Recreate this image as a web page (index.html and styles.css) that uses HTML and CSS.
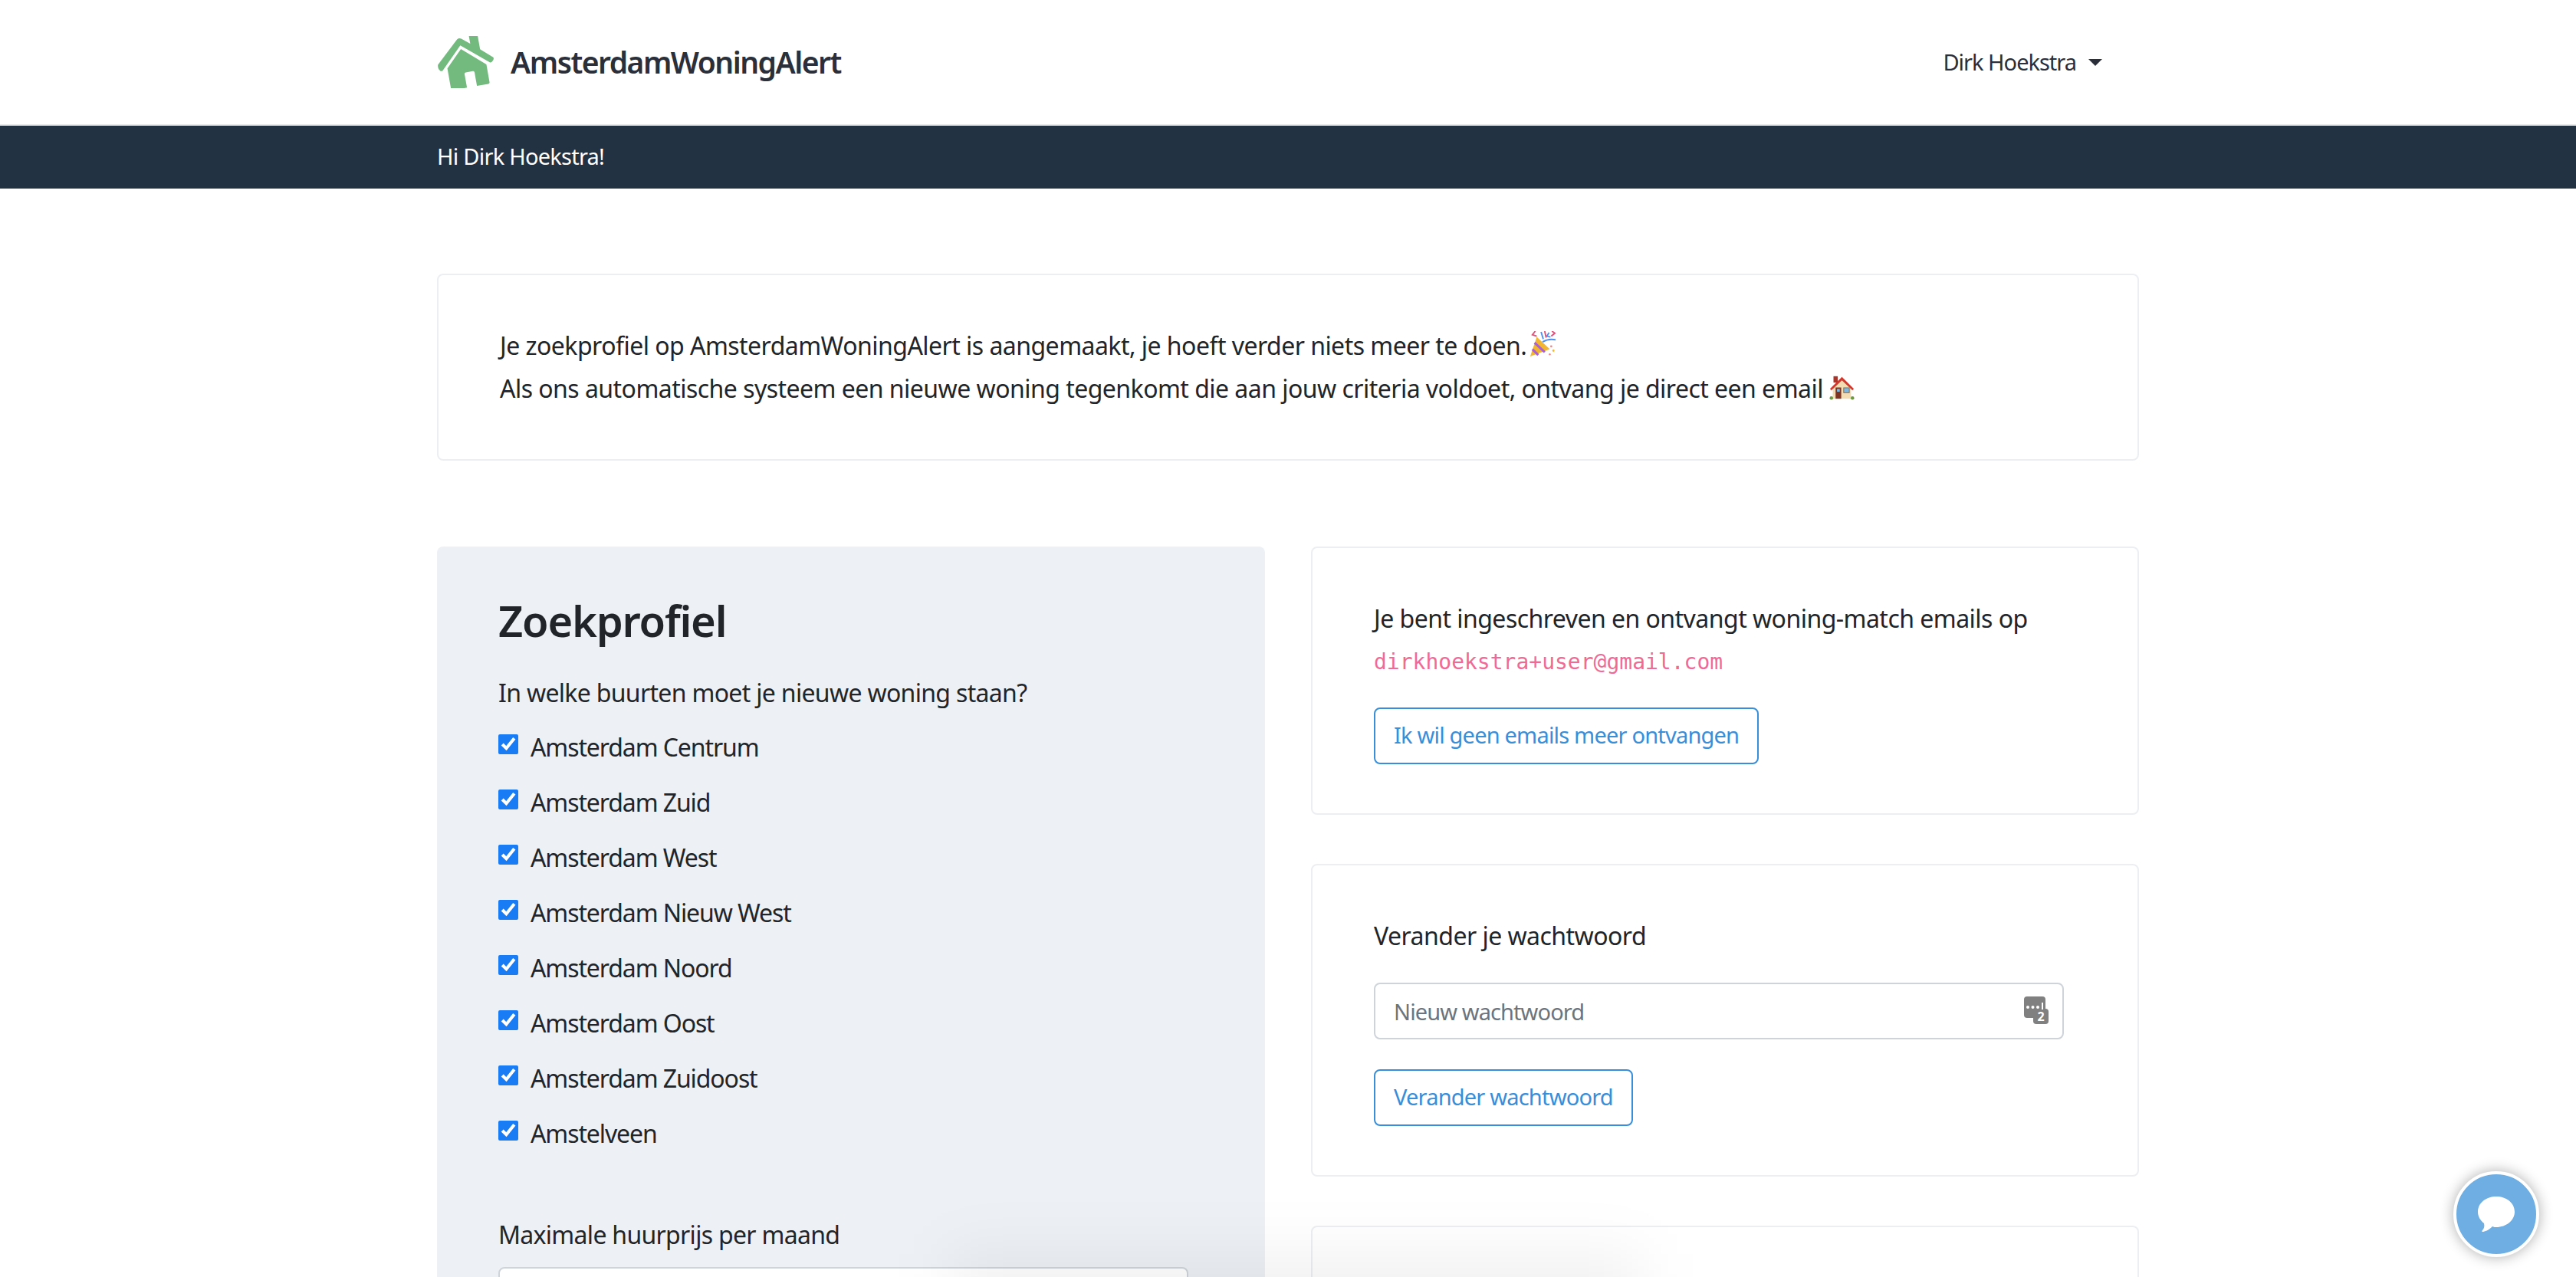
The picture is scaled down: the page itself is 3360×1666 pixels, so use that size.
FILE: index.html
```html
<!DOCTYPE html>
<html lang="nl">
<head>
  <meta charset="UTF-8">
  <title>AmsterdamWoningAlert</title>
  <link rel="stylesheet" href="styles.css">
</head>
<body>
  <header class="topbar">
    <div class="wrap topbar-inner">
      <a class="brand">
        <svg class="brand-icon" viewBox="0 0 80 72" width="76" height="68">
          <g transform="rotate(-10 40 36)" fill="#73ba7e">
            <path d="M1 33 L33 3 Q36 1 39 3 L50 12 L50 2 Q50 0 52 0 L60 0 Q62 0 62 2 L62 22 L78 36 Q79 38 77 40 L75 42 Q73 43 72 42 L36 12 L6 42 Q5 43 3 42 L1 39 Q0 36 1 33Z"/>
            <path d="M36 17 L67 44 L67 69 Q67 71 65 71 L49 71 L49 52 Q49 50 47 50 L37 50 Q35 50 35 52 L35 71 L15 71 Q13 71 13 69 L13 40Z"/>
          </g>
        </svg>
        <span class="brand-name">AmsterdamWoningAlert</span>
      </a>
      <div class="user-menu">Dirk Hoekstra <span class="caret"></span></div>
    </div>
  </header>
  <div class="greeting">
    <div class="wrap">Hi Dirk Hoekstra!</div>
  </div>

  <main class="wrap main">
    <section class="card intro">
      <p>Je zoekprofiel op AmsterdamWoningAlert is aangemaakt, je hoeft verder niets meer te doen.
        <svg class="emoji emoji-party" viewBox="0 0 36 36" width="34" height="34">
          <path d="M1 35 L10 8 L28 25Z" fill="#f2b632"/>
          <path d="M7 16 L21 29 M4 25 L12 33" stroke="#a65fd6" stroke-width="3.2"/>
          <path d="M18 15 Q26 10 36 12 M16 1 L19 11 M27 2 L24 7 L29 8" stroke="#4f8ff0" stroke-width="2" fill="none"/>
          <path d="M8 0 L4 5 L10 7 M21 0 L23 9 M31 0 L35 3 L30 7" stroke="#e0527c" stroke-width="2" fill="none"/>
          <circle cx="30" cy="21" r="1.5" fill="#e88"/><circle cx="33" cy="27" r="1.5" fill="#f2b632"/><circle cx="28" cy="32" r="1.3" fill="#e88"/>
        </svg>
        <br>Als ons automatische systeem een nieuwe woning tegenkomt die aan jouw criteria voldoet, ontvang je direct een email
        <svg class="emoji" viewBox="0 0 36 36" width="33" height="33">
          <rect x="6" y="2" width="6" height="9" fill="#a8352c"/>
          <path d="M18 7 L31 19 L31 34 L5 34 L5 19Z" fill="#f3dcb2"/>
          <path d="M1 20 L18 3 L35 20 L33 22 L18 8 L3 22Z" fill="#cf3a30"/>
          <rect x="9" y="18" width="8" height="16" fill="#7c3322"/><rect x="11" y="20" width="4" height="4" fill="#7bb7e0"/>
          <rect x="20" y="18" width="9" height="8" fill="#7a6a55"/><rect x="21" y="19" width="7" height="6" fill="#7bb7e0"/>
          <circle cx="3" cy="33" r="2.5" fill="#6a9a3a"/><circle cx="33" cy="33" r="2.5" fill="#6a9a3a"/>
        </svg>
      </p>
    </section>

    <div class="columns">
      <section class="profile">
        <h2>Zoekprofiel</h2>
        <p class="question">In welke buurten moet je nieuwe woning staan?</p>
        <label class="check"><input type="checkbox" checked> Amsterdam Centrum</label>
        <label class="check"><input type="checkbox" checked> Amsterdam Zuid</label>
        <label class="check"><input type="checkbox" checked> Amsterdam West</label>
        <label class="check"><input type="checkbox" checked> Amsterdam Nieuw West</label>
        <label class="check"><input type="checkbox" checked> Amsterdam Noord</label>
        <label class="check"><input type="checkbox" checked> Amsterdam Oost</label>
        <label class="check"><input type="checkbox" checked> Amsterdam Zuidoost</label>
        <label class="check"><input type="checkbox" checked> Amstelveen</label>
        <p class="price-label">Maximale huurprijs per maand</p>
        <input class="field" type="text">
      </section>

      <div class="side">
        <section class="card">
          <p>Je bent ingeschreven en ontvangt woning-match emails op</p>
          <code class="mail">dirkhoekstra+user@gmail.com</code>
          <a class="btn">Ik wil geen emails meer ontvangen</a>
        </section>
        <section class="card">
          <p>Verander je wachtwoord</p>
          <div class="field-wrap">
            <input class="field" type="text" placeholder="Nieuw wachtwoord">
            <div class="pw-icon">
              <svg viewBox="0 0 32 36" width="32" height="36">
                <rect x="0" y="0" width="28" height="28" rx="4" fill="#808080"/>
                <rect x="12" y="16" width="20" height="20" rx="4" fill="#808080"/>
                <circle cx="5" cy="14" r="2" fill="#fff"/><circle cx="11.5" cy="14" r="2" fill="#fff"/><circle cx="18" cy="14" r="2" fill="#fff"/>
                <rect x="23" y="8" width="2" height="9" fill="#fff"/>
              </svg>
              <span class="pw-two">2</span>
            </div>
          </div>
          <a class="btn">Verander wachtwoord</a>
        </section>
        <section class="card"></section>
      </div>
    </div>
  </main>

  <div class="shade"></div>
  <button class="chat">
    <svg viewBox="0 0 50 46" width="50" height="46">
      <path d="M25 0 C38 0 49 8 49 20 C49 31 38 40 25 40 C23 40 22 40 20 39 C15 44 10 46 7 46 C6 46 6 45 7 44 C9 42 10 39 9 35 C4 31 1 26 1 20 C1 8 12 0 25 0Z" fill="#fff"/>
    </svg>
  </button>
</body>
</html>
```

FILE: styles.css
```css
* {
  box-sizing: border-box;
}
html, body {
  height: 100%;
}
body {
  margin: 0;
  font-family: "Noto Sans", sans-serif;
  font-size: 32px;
  line-height: 56px;
  letter-spacing: -0.53px;
  color: #212529;
  background: #fff;
  overflow: hidden;
}
p {
  margin: 0;
}
.wrap {
  width: 2220px;
  margin: 0 auto;
}
.topbar {
  height: 164px;
  border-bottom: 2px solid #e9e9e9;
}
.topbar-inner {
  height: 100%;
  display: flex;
  align-items: center;
  justify-content: space-between;
  padding-right: 48px;
}
.brand {
  display: flex;
  align-items: center;
  gap: 20px;
}
.brand-name {
  font-size: 39px;
  font-weight: 600;
  letter-spacing: -1.5px;
  color: #2a2f3a;
}
.user-menu {
  font-size: 29px;
  letter-spacing: -1px;
  color: #2a2f3a;
  display: flex;
  align-items: center;
  gap: 16px;
}
.caret {
  border-top: 9px solid #2a2f3a;
  border-left: 9px solid transparent;
  border-right: 9px solid transparent;
}
.greeting {
  height: 82px;
  background: #233243;
  color: #fff;
  font-size: 29px;
  letter-spacing: -0.75px;
  line-height: 80px;
}
.main {
  padding-top: 111px;
}
.card {
  border: 2px solid #eceef1;
  border-radius: 8px;
  padding: 64px 80px;
  background: #fff;
}
.intro {
  height: 244px;
}
.columns {
  margin-top: 112px;
  display: grid;
  grid-template-columns: 1080px 1080px;
  gap: 60px;
}
.profile {
  background: #edf0f5;
  border-radius: 8px;
  padding: 60px 80px;
  height: 1200px;
}
.profile h2 {
  margin: 0 0 31px;
  font-size: 56px;
  line-height: 72px;
  font-weight: 600;
  letter-spacing: -1.2px;
}
.question {
  margin-bottom: 7px;
  letter-spacing: -0.68px;
}
.check {
  display: flex;
  align-items: center;
  gap: 16px;
  height: 72px;
  letter-spacing: -1.1px;
}
.check input {
  width: 26px;
  height: 26px;
  margin: 0 0 8px;
  accent-color: #1a7cf5;
}
.price-label {
  margin-top: 68px;
  letter-spacing: -0.7px;
}
.field {
  display: block;
  width: 900px;
  height: 74px;
  margin-top: 14px;
  padding: 0 24px;
  border: 2px solid #ced4da;
  border-radius: 8px;
  font: 29px "Noto Sans", sans-serif;
  letter-spacing: -0.9px;
  background: #fff;
}
.field::placeholder {
  color: #6c757d;
}
.side {
  display: flex;
  flex-direction: column;
  gap: 64px;
}
.mail {
  display: block;
  margin-bottom: 30px;
  font: 28px/58px "DejaVu Sans Mono", monospace;
  letter-spacing: 0;
  color: #f06a95;
}
.btn {
  display: block;
  width: fit-content;
  padding: 0 24px;
  height: 74px;
  line-height: 68px;
  border: 2px solid #388ed9;
  border-radius: 8px;
  color: #388ed9;
  font-size: 29px;
  letter-spacing: -0.8px;
}
.field-wrap {
  position: relative;
  width: 900px;
  margin: 33px 0 39px;
}
.field-wrap .field {
  margin-top: 0;
}
.pw-icon {
  position: absolute;
  right: 20px;
  top: 18px;
  width: 32px;
  height: 36px;
  line-height: 0;
}
.pw-two {
  position: absolute;
  left: 12px;
  bottom: 0;
  width: 20px;
  height: 20px;
  font: 700 16px/20px "Noto Sans", sans-serif;
  letter-spacing: 0;
  text-align: center;
  color: #fff;
}
.emoji {
  vertical-align: -3px;
}
.emoji-party {
  margin-left: -4px;
}
.shade {
  position: fixed;
  left: 1240px;
  bottom: -110px;
  width: 900px;
  height: 140px;
  background: rgba(0, 0, 0, 0.055);
  filter: blur(40px);
  pointer-events: none;
}
.chat {
  position: fixed;
  right: 48px;
  bottom: 26px;
  width: 112px;
  height: 112px;
  padding: 0;
  border: 4px solid #fff;
  border-radius: 50%;
  background: #6eaee3;
  box-shadow: 0 0 18px rgba(0, 0, 0, 0.32);
  display: flex;
  align-items: center;
  justify-content: center;
}
```
